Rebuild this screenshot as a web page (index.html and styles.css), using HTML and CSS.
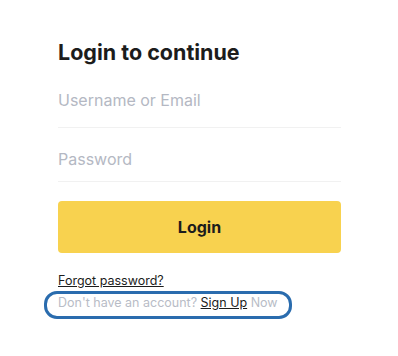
FILE: index.html
```html
<!DOCTYPE html>
<html lang="en">
<head>
<meta charset="utf-8">
<title>Login</title>
<link rel="stylesheet" href="styles.css">
</head>
<body>
<main class="login">
  <h1 class="login-title">Login to continue</h1>
  <form class="login-form">
    <input class="field field-user" type="text" placeholder="Username or Email">
    <input class="field field-pass" type="password" placeholder="Password">
    <button class="login-btn" type="button">Login</button>
  </form>
  <a class="forgot" href="#">Forgot password?</a>
  <p class="signup"><span class="muted">Don't have an account?</span> <a class="signup-link" href="#">Sign Up</a> <span class="muted">Now</span></p>
</main>
</body>
</html>
```
FILE: styles.css
```css
html, body {
  margin: 0;
  padding: 0;
  background: #ffffff;
}
body {
  font-family: Inter, "Noto Sans", sans-serif;
  color: #1c1c1c;
}
.login {
  width: 283px;
  padding: 39px 0 0 58px;
}
.login-title {
  margin: 0;
  font-size: 21.5px;
  line-height: 26px;
  font-weight: 700;
  color: #1c1c1c;
}
.login-form {
  margin: 9px 0 0;
  display: flex;
  flex-direction: column;
}
.field {
  display: block;
  width: 283px;
  box-sizing: border-box;
  margin: 0;
  padding-left: 0;
  padding-right: 0;
  border: 0;
  border-bottom: 1px solid #f1f1f1;
  font-family: inherit;
  font-size: 16px;
  line-height: 20px;
  height: auto;
  outline: none;
  background: transparent;
  color: #1c1c1c;
}
.field::placeholder {
  color: #b4b8c3;
  opacity: 1;
}
.field-user {
  padding-top: 16px;
  padding-bottom: 17px;
}
.field-pass {
  padding-top: 21px;
  padding-bottom: 12px;
}
.login-btn {
  margin-top: 19px;
  height: 52px;
  width: 283px;
  border: 0;
  border-radius: 4px;
  background: #f8d24f;
  font-family: inherit;
  font-size: 16px;
  font-weight: 700;
  color: #1c1c1c;
  cursor: pointer;
}
.forgot {
  display: block;
  margin-top: 20px;
  font-size: 12.5px;
  line-height: 16px;
  color: #1c1c1c;
  text-decoration: underline;
  width: max-content;
}
.signup {
  display: inline-block;
  margin: 2px 0 0 -14px;
  padding: 1px 11px 5px 11px;
  border: 3px solid #2a6cae;
  border-radius: 13px;
  font-size: 12.5px;
  line-height: 16px;
  white-space: nowrap;
}
.muted {
  color: #b8bcc6;
}
.signup-link {
  color: #1c1c1c;
  text-decoration: underline;
}
```
